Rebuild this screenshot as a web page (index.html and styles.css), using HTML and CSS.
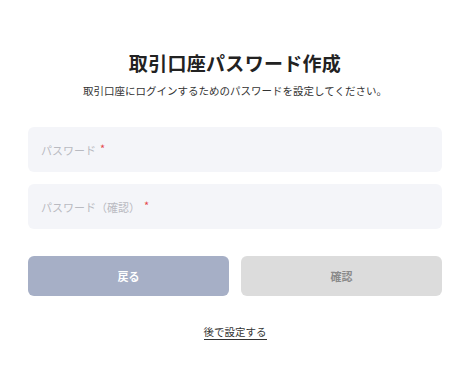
FILE: index.html
```html
<!DOCTYPE html>
<html lang="ja">
<head>
<meta charset="utf-8">
<link rel="stylesheet" href="styles.css">
</head>
<body>
<main class="page">
  <h1 class="title">取引口座パスワード作成</h1>
  <p class="lead">取引口座にログインするためのパスワードを設定してください。</p>
  <form class="form">
    <label class="field"><span class="ph">パスワード<span class="req">*</span></span></label>
    <label class="field"><span class="ph">パスワード（確認）<span class="req">*</span></span></label>
    <div class="actions">
      <button type="button" class="btn btn-back">戻る</button>
      <button type="button" class="btn btn-confirm">確認</button>
    </div>
  </form>
  <a class="later" href="#">後で設定する</a>
</main>
</body>
</html>
```
FILE: styles.css
```css
* { box-sizing: border-box; }
html, body { margin: 0; padding: 0; background: #fff; }
body {
  font-family: "Noto Sans CJK JP", "Noto Sans", sans-serif;
  color: #222;
}
.page {
  width: 414px;
  margin-left: 28px;
  padding-top: 49px;
  display: flex;
  flex-direction: column;
  align-items: center;
}
.title {
  margin: 0;
  font-size: 19px;
  line-height: 28px;
  font-weight: 700;
  letter-spacing: 0.3px;
  color: #222;
}
.lead {
  margin: 6px 0 0;
  font-size: 10.5px;
  line-height: 16px;
  color: #333;
}
.form {
  width: 100%;
  margin-top: 28px;
  display: flex;
  flex-direction: column;
  gap: 12px;
}
.field {
  height: 45px;
  background: #f4f5f9;
  border-radius: 6px;
  display: flex;
  align-items: center;
  padding-left: 13px;
}
.ph {
  font-size: 11px;
  color: #b9bac1;
}
.req {
  color: #e5484d;
  margin-left: 4px;
  position: relative;
  top: -2px;
}
.actions {
  margin-top: 15px;
  display: grid;
  grid-template-columns: 1fr 1fr;
  gap: 12px;
}
.btn {
  height: 40px;
  border: 0;
  border-radius: 6px;
  font-family: inherit;
  font-size: 11px;
  font-weight: 700;
}
.btn-back { background: #a6afc6; color: #fff; }
.btn-confirm { background: #dcdcdc; color: #8a8a8a; }
.later {
  margin-top: 29px;
  font-size: 10.5px;
  line-height: 14px;
  color: #333;
  text-decoration: none;
  border-bottom: 1px solid #333;
}
```
